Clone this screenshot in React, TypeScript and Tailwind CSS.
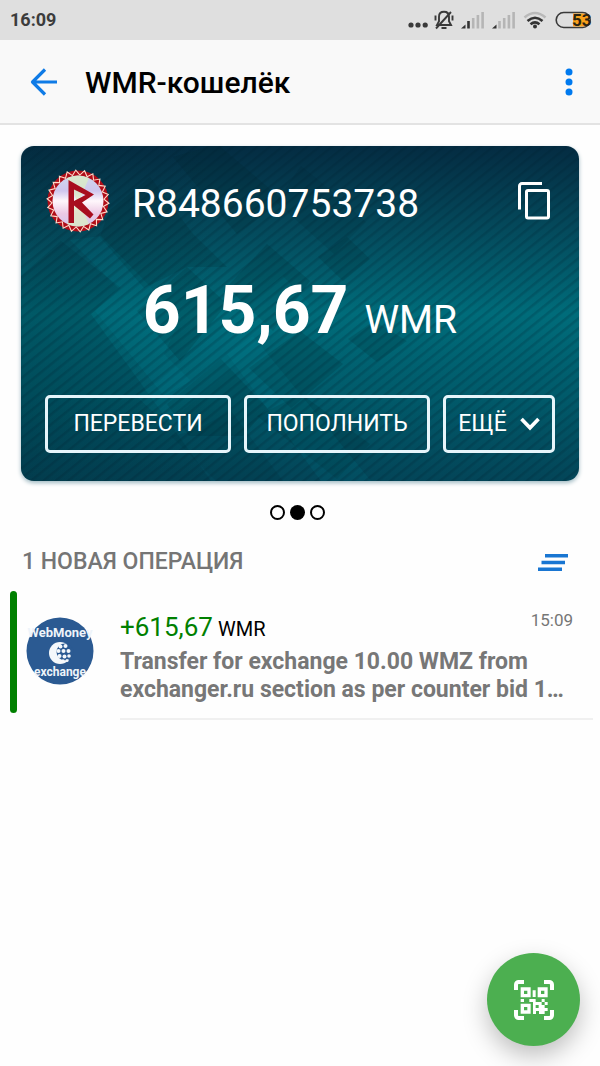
import React from "react";

const SPIKES = 22;

function zigzag(cx: number, cy: number, inner: number, outer: number) {
  const points: string[] = [];
  for (let i = 0; i < SPIKES * 2; i++) {
    const r = i % 2 === 0 ? outer : inner;
    const a = (Math.PI * (i + 0.5)) / SPIKES;
    points.push(`${(cx + r * Math.cos(a)).toFixed(2)},${(cy + r * Math.sin(a)).toFixed(2)}`);
  }
  return points.join(" ");
}

function SignalIcon({ active }: { active: number }) {
  return (
    <svg viewBox="0 0 23 17" className="h-[17px] w-[23px]" aria-hidden="true">
      {[0, 1, 2, 3, 4].map((i) => {
        const on = i < active;
        const top = 12 - i * 3;
        return i === 0 ? (
          <path key={i} d="M0 16.5 4.5 12.5V16.5Z" fill={on ? "#333" : "#b5b5b5"} />
        ) : (
          <rect key={i} x={1.5 + i * 4.7} y={top} width="2.6" height={16.5 - top} fill={on ? "#333" : "#b5b5b5"} />
        );
      })}
    </svg>
  );
}

function StatusBar() {
  return (
    <div className="flex h-10 items-center justify-between bg-[#dfdfdf] pr-[7px] pl-[10px] text-[#3c3c3c]">
      <span className="text-[18px] leading-6 font-bold">16:09</span>
      <div className="flex items-center">
        <svg viewBox="0 0 20 20" className="h-5 w-5" aria-hidden="true" fill="#3a3a3a">
          <circle cx="3" cy="15" r="2.6" />
          <circle cx="10" cy="15" r="2.6" />
          <circle cx="17.2" cy="15" r="2.6" />
        </svg>
        <svg viewBox="0 0 20 20" className="ml-[6px] h-5 w-5" aria-hidden="true" fill="none" stroke="#3a3a3a" strokeWidth="1.9">
          <path d="M10 1.800c-3.200 0-5 2.200-5 5v4.500L3 15h14l-2-3.700V6.800c0-2.800-1.800-5-5-5Z" />
          <path d="M7.500 18h5M1.500 5.500v5M18.500 5.500v5M2 18.500 17 2" />
        </svg>
        <span className="ml-[7px]"><SignalIcon active={2} /></span>
        <span className="ml-2"><SignalIcon active={1} /></span>
        <svg viewBox="0 0 24 18" className="ml-2 h-[18px] w-6" aria-hidden="true" fill="none" strokeWidth="2.600">
          <path d="M1.500 6.500Q12-2.500 22.500 6.500" stroke="#b9b9b9" />
          <path d="M4.500 10Q12 3.500 19.500 10M7.500 13.200Q12 9.500 16.500 13.200" stroke="#333" />
          <circle cx="12" cy="15.500" r="2" fill="#333" />
        </svg>
        <svg viewBox="0 0 38 18" className="ml-2 h-[18px] w-[38px]" role="img" aria-label="53%">
          <rect x="1.200" y="1.500" width="34" height="15" rx="7.500" fill="none" stroke="#3a3a3a" strokeWidth="1.600" />
          <path d="M18 2.500H28a6.500 6.500 0 0 1 0 13H18Z" fill="#f9a11b" />
          <text x="17" y="15.200" className="font-[Roboto,sans-serif] text-[17px] font-bold" fill="#2b2412">53</text>
        </svg>
      </div>
    </div>
  );
}

function Header() {
  return (
    <header className="flex h-[85px] items-center border-b-2 border-[#e3e3e3] bg-[#f9f9f9] pr-[15px] pl-7">
      <button type="button" aria-label="Назад" className="flex h-8 w-8 items-center justify-center">
        <svg viewBox="0 0 28 28" className="h-7 w-7" fill="none" stroke="#0f7be6" strokeWidth="3.200" strokeLinejoin="round">
          <path d="M27 14H3M15 1.500 2.500 14 15 26.500" />
        </svg>
      </button>
      <h1 className="ml-[25px] flex-1 pt-[2px] text-[30px] leading-9 font-medium text-black">WMR-кошелёк</h1>
      <button type="button" aria-label="Меню" className="flex h-8 w-8 items-center justify-center">
        <svg viewBox="0 0 8 28" className="h-7 w-2" fill="#007aef">
          <circle cx="4" cy="4" r="3.500" />
          <circle cx="4" cy="14" r="3.500" />
          <circle cx="4" cy="24" r="3.500" />
        </svg>
      </button>
    </header>
  );
}

function CardArt() {
  return (
    <svg viewBox="0 0 558 335" preserveAspectRatio="xMidYMid slice" className="absolute inset-0 h-full w-full" aria-hidden="true">
      <defs>
        <linearGradient id="base" x1="0" y1="0" x2="0" y2="1">
          <stop offset="0" stopColor="#042c42" />
          <stop offset="0.250" stopColor="#044a5c" />
          <stop offset="0.500" stopColor="#006c7a" />
          <stop offset="0.750" stopColor="#015a6a" />
          <stop offset="1" stopColor="#034558" />
        </linearGradient>
        <linearGradient id="side" x1="0" y1="0" x2="1" y2="0">
          <stop offset="0" stopColor="#002631" stopOpacity="0.140" />
          <stop offset="0.350" stopColor="#002631" stopOpacity="0" />
        </linearGradient>
        <pattern id="stripes" width="7.800" height="7.800" patternUnits="userSpaceOnUse" patternTransform="rotate(-39)">
          <rect width="7.800" height="2.600" fill="#00202c" fillOpacity="0.200" />
        </pattern>
      </defs>
      <rect width="558" height="335" fill="url(#base)" />
      <rect width="558" height="335" fill="url(#side)" />
      <g fill="#00212b" fillOpacity="0.170">
        <path d="M88 65 129 31 172 88 206 121 166 121 123 142 79 91Z" />
        <path d="M152 11 196-2 262 54 216 88Z" />
        <path d="M280 20 302 38 345 76 313 108 255 56Z" fillOpacity="0.100" />
        <path d="M166 121 206 158 159 215 116 165Z" />
        <path d="M246 98 289 135 252 185 206 141Z" />
        <path d="M326 91 349 113 322 135 297 111Z" />
        <path d="M200 213 246 262 222 290 168 290 146 258Z" />
        <path d="M279 185 322 218 270 262 228 222Z" />
        <path d="M353 175 386 195 356 216 327 193Z" />
        <path d="M280 248 349 298 316 333 236 270Z" />
        <path d="M173 285 210 265 262 335H195L150 290Z" fillOpacity="0.100" />
      </g>
      <path d="M0 130 40 95 100 142 70 168 190 335H0Z" fill="#002631" fillOpacity="0.160" />
      <g fill="#00a0b4" fillOpacity="0.100">
        <path d="M49 94 80 90 160 172 143 208 170 235 143 250 74 165 97 142Z" />
        <path d="M138 235 262 130 290 160 145 278 115 250Z" />
        <path d="M206 208 232 190 350 335H300Z" />
      </g>
      <rect width="558" height="335" fill="url(#stripes)" />
    </svg>
  );
}

function RubleSeal() {
  return (
    <svg viewBox="0 0 64 64" className="h-16 w-16 shrink-0" aria-hidden="true">
      <defs>
        <linearGradient id="holo" x1="0" y1="0" x2="0" y2="1">
          <stop offset="0" stopColor="#cfd8ee" />
          <stop offset="0.300" stopColor="#cfc6ee" />
          <stop offset="0.500" stopColor="#fff7fb" />
          <stop offset="0.750" stopColor="#ecc9e4" />
          <stop offset="1" stopColor="#d2c8ee" />
        </linearGradient>
      </defs>
      <circle cx="32" cy="32" r="30.500" fill="#b00d18" />
      <circle cx="32" cy="32" r="25.500" fill="url(#holo)" />
      <path d="M21 9Q32 4 43 9L33 32 43 55Q32 60 21 55L31 32Z" fill="#dcf0c0" fillOpacity="0.700" />
      <polygon points={zigzag(32, 32, 26, 31)} fill="none" stroke="#ffd9c9" strokeWidth="1.100" />
      <path fillRule="evenodd" d="M22.500 11 48 25.500 36 33.500 47.500 45.500 44 49.500 28 36.500V54H22.500ZM28 20.500V32L39.500 26Z" fill="#a80d1e" />
    </svg>
  );
}

function WalletCard() {
  const button = "flex h-[58px] items-center justify-center rounded-[5px] border-[3px] border-[#e6f5fb] text-[23px] leading-7 text-white";
  return (
    <section className="relative overflow-hidden rounded-[13px] px-6 pt-[23px] pb-7 text-white shadow-[0_2px_4px_#9fb9c2]">
      <CardArt />
      <div className="relative">
        <div className="flex items-center pl-[1px]">
          <RubleSeal />
          <span className="ml-[22px] flex-1 pt-[6px] text-[39px] leading-[58px]">R848660753738</span>
          <button type="button" aria-label="Копировать" className="mr-[5px]">
            <svg viewBox="0 0 32 38" className="h-[38px] w-8" fill="none" stroke="#fff" strokeWidth="3">
              <path d="M1.500 27.500V4a2.500 2.500 0 0 1 2.500-2.500H24" />
              <rect x="8.500" y="8.500" width="22" height="27.500" rx="1.500" />
            </svg>
          </button>
        </div>
        <p className="mt-[38px] flex items-baseline justify-center gap-4 leading-[80px]">
          <span className="text-[66px] font-bold">615,67</span>
          <span className="text-[39px]">WMR</span>
        </p>
        <div className="mt-[35px] grid grid-cols-[186fr_186fr_112fr] gap-[13px]">
          <button type="button" className={button}>ПЕРЕВЕСТИ</button>
          <button type="button" className={button}>ПОПОЛНИТЬ</button>
          <button type="button" className={button}>
            ЕЩЁ
            <svg viewBox="0 0 20 14" className="ml-[13px] h-[14px] w-5" fill="none" stroke="#fff" strokeWidth="3.600" aria-hidden="true">
              <path d="M1.500 2 10 10.800 18.500 2" />
            </svg>
          </button>
        </div>
      </div>
    </section>
  );
}

function ExchangeLogo() {
  return (
    <svg viewBox="0 0 68 68" className="h-[68px] w-[68px]" aria-hidden="true">
      <circle cx="34" cy="34" r="33.500" fill="#2b5a92" />
      <text x="34" y="20" textAnchor="middle" className="font-[Roboto,sans-serif] text-[13px] font-bold" fill="#eef4fa">WebMoney</text>
      <circle cx="34" cy="36" r="11" fill="#f4f8fb" />
      <circle cx="39" cy="35" r="8.500" fill="#2b5a92" />
      <g fill="#f4f8fb">
        <circle cx="34.500" cy="29.500" r="2" /><circle cx="39.500" cy="29" r="2" />
        <circle cx="32.500" cy="34" r="2" /><circle cx="37.500" cy="34" r="2" /><circle cx="42.500" cy="34" r="2" />
        <circle cx="33.500" cy="39" r="2" /><circle cx="38.500" cy="39.500" r="2" /><circle cx="43" cy="39" r="1.800" />
        <circle cx="37" cy="44" r="1.800" /><circle cx="41" cy="43.500" r="1.600" />
      </g>
      <text x="34" y="59" textAnchor="middle" className="font-[Roboto,sans-serif] text-[12px] font-bold" fill="#eef4fa">exchange</text>
    </svg>
  );
}

function Operation() {
  return (
    <li className="flex pl-[10px]">
      <span className="h-[122px] w-[7px] shrink-0 rounded-full bg-[#008000]" />
      <div className="ml-[9px] flex h-[120px] shrink-0 items-center">
        <ExchangeLogo />
      </div>
      <div className="mr-[7px] ml-[26px] min-w-0 flex-1 self-start border-b-2 border-[#f0f0f0] pt-5 pr-5 pb-[14px]">
        <div className="flex items-start justify-between">
          <p className="flex items-baseline gap-[5px] leading-8">
            <span className="text-[26px] text-[#008000]">+615,67</span>
            <span className="text-[20px] text-black">WMR</span>
          </p>
          <time className="text-[17px] leading-[18px] text-[#767676]">15:09</time>
        </div>
        <p className="mt-[3px] text-[23px] leading-[28px] font-bold text-[#777]">
          Transfer for exchange 10.00 WMZ from exchanger.ru section as per counter bid 1…
        </p>
      </div>
    </li>
  );
}

function ScanButton() {
  return (
    <button
      type="button"
      aria-label="Сканировать QR-код"
      className="fixed right-5 bottom-5 flex h-[93px] w-[93px] items-center justify-center rounded-full bg-[#4caf50] shadow-[0_10px_24px_rgba(0,0,0,0.25)]"
    >
      <svg viewBox="0 0 120 120" className="h-10 w-10" fill="#fff">
        <path
          d="M6 30V14a8 8 0 0 1 8-8H30M90 6h16a8 8 0 0 1 8 8V30M114 90v16a8 8 0 0 1-8 8H90M30 114H14a8 8 0 0 1-8-8V90"
          fill="none"
          stroke="#fff"
          strokeWidth="12"
        />
        <path
          fillRule="evenodd"
          d="M20 22h30v30H20ZM30 32h10v10H30ZM71 22h30v30H71ZM81 32h10v10H81ZM20 71h30v30H20ZM30 81h10v10H30Z"
        />
        <path d="M56 31h9v20h-9ZM20 57h10v9H20ZM46 57h19v9h9v9h-9v9h9v-9h9v9h9v9h-9v9h-8v-9h-9v9h-9V66H46ZM83 57h9v9h-9ZM74 66h9v9h-9ZM92 66h9v9h-9ZM92 84h9v9h-9ZM83 75h9v9h-9ZM83 93h9v9h-9Z" />
      </svg>
    </button>
  );
}

export default function App() {
  return (
    <div className="min-h-screen bg-[#fefefe] font-[Roboto,'Noto_Sans',sans-serif]">
      <StatusBar />
      <Header />
      <main>
        <div className="px-[21px] pt-[21px]">
          <WalletCard />
          <div className="mt-6 flex justify-center gap-[5px] pr-[5px]" aria-hidden="true">
            <span className="h-[15px] w-[15px] rounded-full border-2 border-black" />
            <span className="h-[15px] w-[15px] rounded-full bg-black" />
            <span className="h-[15px] w-[15px] rounded-full border-2 border-black" />
          </div>
        </div>
        <div className="mt-[26px] flex items-center justify-between pr-8 pl-[22px]">
          <h2 className="text-[23px] leading-8 font-medium text-[#757575]">1 НОВАЯ ОПЕРАЦИЯ</h2>
          <button type="button" aria-label="Фильтр">
            <svg viewBox="0 0 30 17" className="h-[17px] w-[30px]" fill="#1976d2">
              <path d="M7 0H30V3.500H7ZM3.500 6.800H27V10.300H3.500ZM0 13.500H24V17H0Z" />
            </svg>
          </button>
        </div>
        <ul className="mt-[13px]">
          <Operation />
        </ul>
      </main>
      <ScanButton />
    </div>
  );
}
